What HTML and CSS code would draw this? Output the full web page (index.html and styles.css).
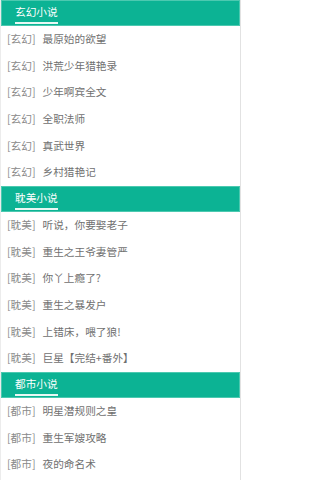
FILE: index.html
```html
<!DOCTYPE html>
<html lang="zh">
<head>
<meta charset="utf-8">
<link rel="stylesheet" href="styles.css">
</head>
<body>
<div class="wrap">
  <section class="block">
    <h2 class="head"><span class="head-title">玄幻小说</span></h2>
    <ul class="list">
      <li class="item"><span class="cat">[玄幻]</span><span class="name">最原始的欲望</span></li>
      <li class="item"><span class="cat">[玄幻]</span><span class="name">洪荒少年猎艳录</span></li>
      <li class="item"><span class="cat">[玄幻]</span><span class="name">少年啊宾全文</span></li>
      <li class="item"><span class="cat">[玄幻]</span><span class="name">全职法师</span></li>
      <li class="item"><span class="cat">[玄幻]</span><span class="name">真武世界</span></li>
      <li class="item"><span class="cat">[玄幻]</span><span class="name">乡村猎艳记</span></li>
    </ul>
  </section>
  <section class="block">
    <h2 class="head"><span class="head-title">耽美小说</span></h2>
    <ul class="list">
      <li class="item"><span class="cat">[耽美]</span><span class="name">听说，你要娶老子</span></li>
      <li class="item"><span class="cat">[耽美]</span><span class="name">重生之王爷妻管严</span></li>
      <li class="item"><span class="cat">[耽美]</span><span class="name">你丫上瘾了?</span></li>
      <li class="item"><span class="cat">[耽美]</span><span class="name">重生之暴发户</span></li>
      <li class="item"><span class="cat">[耽美]</span><span class="name">上错床，喂了狼!</span></li>
      <li class="item"><span class="cat">[耽美]</span><span class="name">巨星【完结+番外】</span></li>
    </ul>
  </section>
  <section class="block">
    <h2 class="head"><span class="head-title">都市小说</span></h2>
    <ul class="list">
      <li class="item"><span class="cat">[都市]</span><span class="name">明星潜规则之皇</span></li>
      <li class="item"><span class="cat">[都市]</span><span class="name">重生军嫂攻略</span></li>
      <li class="item"><span class="cat">[都市]</span><span class="name">夜的命名术</span></li>
    </ul>
  </section>
</div>
</body>
</html>
```
FILE: styles.css
```css
html, body {
  margin: 0;
  padding: 0;
  background: #fff;
}
body {
  font-family: "Noto Sans CJK SC", "Noto Sans", sans-serif;
  font-size: 10.67px;
}
.wrap {
  width: 239px;
  border-left: 1px solid #ececec;
  border-right: 1px solid #e2e2e2;
  min-height: 480px;
}
.block {
  margin: 0;
}
.head {
  margin: 0;
  height: 24px;
  background: #0cb394;
  border: 1px solid #4cc9b0;
  padding: 0 0 0 13px;
  font-size: 10.67px;
  font-weight: normal;
  display: flex;
  align-items: flex-end;
}
.head-title {
  color: #fff;
  line-height: 20px;
  border-bottom: 2px solid #e8f8f4;
  padding-bottom: 0;
  margin-bottom: 1px;
}
.list {
  list-style: none;
  margin: 0;
  padding: 0;
}
.item {
  height: 26.67px;
  line-height: 26.67px;
  padding-left: 6px;
  white-space: nowrap;
  overflow: hidden;
}
.cat {
  color: #8a8a8a;
  margin-right: 7px;
}
.name {
  color: #707070;
}
```
